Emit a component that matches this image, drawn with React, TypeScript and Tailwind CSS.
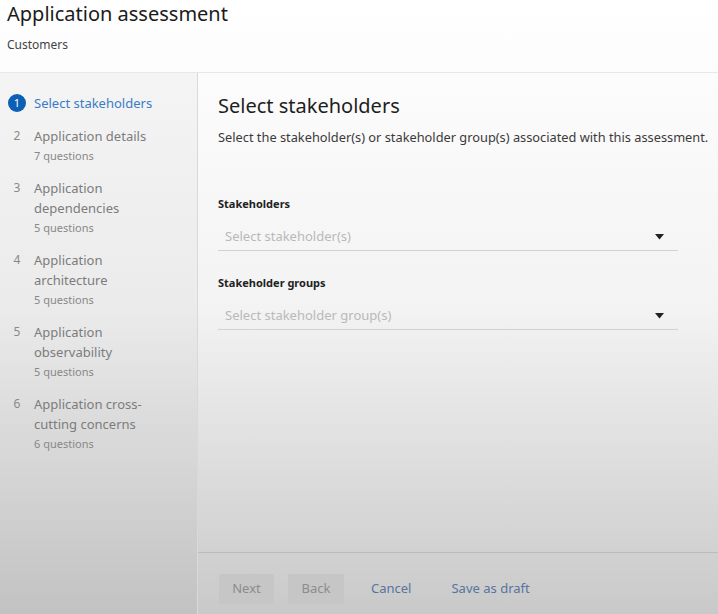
import React from 'react'

const STEPS = [
  { n: 1, title: ['Select stakeholders'], sub: '' },
  { n: 2, title: ['Application details'], sub: '7 questions' },
  { n: 3, title: ['Application', 'dependencies'], sub: '5 questions' },
  { n: 4, title: ['Application', 'architecture'], sub: '5 questions' },
  { n: 5, title: ['Application', 'observability'], sub: '5 questions' },
  { n: 6, title: ['Application cross-', 'cutting concerns'], sub: '6 questions' },
]

export default function App() {
  return (
    <div className="w-[718px] h-[614px] flex flex-col overflow-hidden bg-linear-to-b from-white via-[#f3f3f3] to-[#c9c9c9] font-['Noto_Sans',sans-serif] text-[#151515]">
      {/* Header */}
      <header className="h-[73px] shrink-0 px-[7px] pt-[1px] border-b border-[#e8e8e8]">
        <h1 className="text-[20px] leading-[26px] text-[#1b1b1b]">Application assessment</h1>
        <p className="mt-[10px] text-[12px] leading-[16px] text-[#444]">Customers</p>
      </header>

      <div className="flex flex-1 min-h-0">
        {/* Sidebar */}
        <nav className="w-[198px] shrink-0 border-r border-[#d9d9d9] bg-black/[0.03] pt-[20px] pl-[8px] flex flex-col gap-[13px]">
          {STEPS.map(s => (
            <div key={s.n} className="flex">
              {s.n === 1 ? (
                <span className="w-[18px] h-[18px] mt-[1px] rounded-full bg-[#0c5fb4] text-white text-[11px] leading-[18px] text-center">1</span>
              ) : (
                <span className="w-[18px] text-center text-[12px] leading-[20px] text-[#8a8a8a]">{s.n}</span>
              )}
              <div className="ml-[8px]">
                {s.title.map(t => (
                  <div key={t} className={`text-[13px] leading-[20px] whitespace-nowrap ${s.n === 1 ? 'text-[#3a7cc7]' : 'text-[#7c7c7c]'}`}>{t}</div>
                ))}
                {s.sub && <div className="text-[11px] leading-[19px] text-[#888]">{s.sub}</div>}
              </div>
            </div>
          ))}
        </nav>

        {/* Main */}
        <main className="flex-1 flex flex-col min-w-0">
          <div className="flex-1 pl-[20px] pr-[40px] pt-[20px]">
            <h2 className="text-[20px] leading-[26px] text-[#1e1e1e]">Select stakeholders</h2>
            <p className="mt-[8px] text-[12.8px] leading-[20px] text-[#3a3a3a] whitespace-nowrap">
              Select the stakeholder(s) or stakeholder group(s) associated with this assessment.
            </p>

            <div className="mt-[49px]">
              <Field label="Stakeholders" placeholder="Select stakeholder(s)" />
            </div>
            <div className="mt-[24px]">
              <Field label="Stakeholder groups" placeholder="Select stakeholder group(s)" />
            </div>
          </div>

          <footer className="h-[62px] shrink-0 border-t border-black/10 pl-[21px] pt-[21px] flex items-start text-[13px]">
            <button className="w-[55px] h-[30px] rounded-[2px] bg-[#c6c6c6] text-[#8c8c8c]">Next</button>
            <button className="ml-[14px] w-[56px] h-[30px] rounded-[2px] bg-[#c6c6c6] text-[#8c8c8c]">Back</button>
            <button className="ml-[27px] h-[30px] text-[#5874a0]">Cancel</button>
            <button className="ml-[40px] h-[30px] text-[#5874a0]">Save as draft</button>
          </footer>
        </main>
      </div>
    </div>
  )
}

function Field({ label, placeholder }: { label: string; placeholder: string }) {
  return (
    <div>
      <label className="block text-[11px] leading-[16px] font-bold text-[#222]">{label}</label>
      <div className="mt-[8px] h-[31px] pt-[3px] flex items-center justify-between border-b border-[#d2d2d2] pl-[7px] pr-[14px]">
        <span className="text-[13px] text-[#b9b9b9]">{placeholder}</span>
        <svg width="9" height="6" viewBox="0 0 9 6" className="text-[#222]">
          <path d="M0 0h9L4.5 5.5z" fill="currentColor" />
        </svg>
      </div>
    </div>
  )
}
